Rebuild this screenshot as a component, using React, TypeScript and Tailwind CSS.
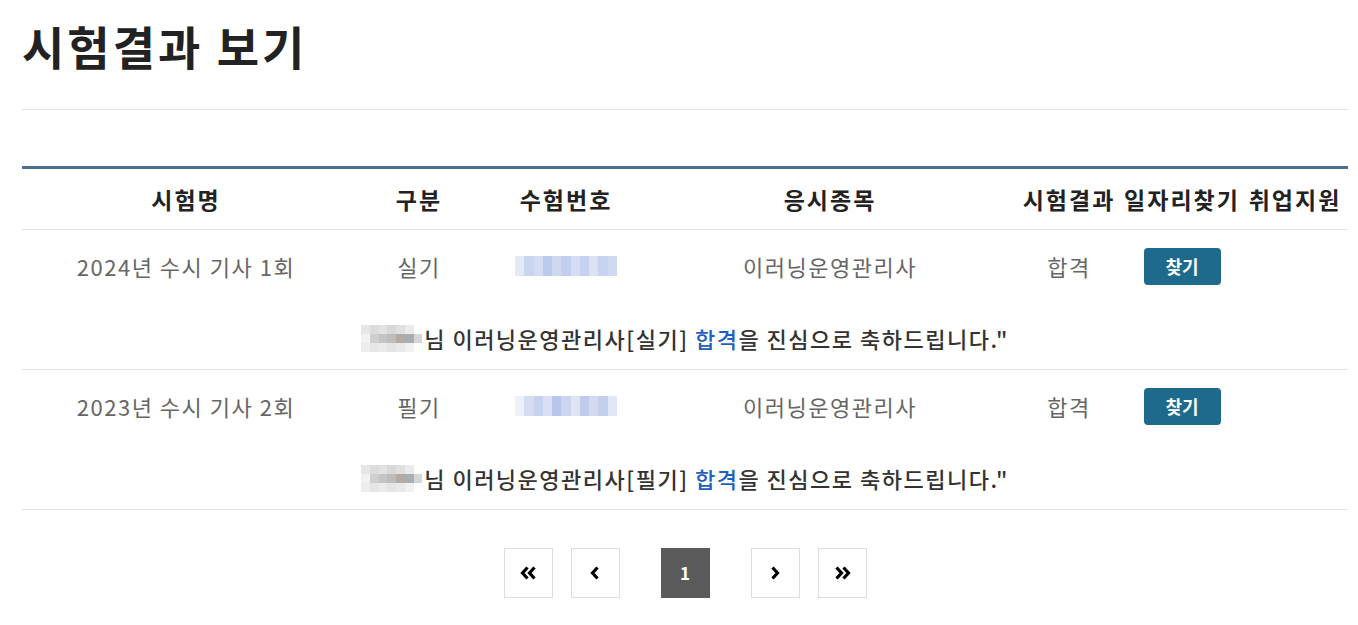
import React from 'react'

interface ResultRow {
  examName: string
  kind: string
  examNo: string[]
  subject: string
  result: string
}

const rows: ResultRow[] = [
  {
    examName: '2024년 수시 기사 1회',
    kind: '실기',
    examNo: ['bg-[#e4e9f6]', 'bg-[#c9d4ef]', 'bg-[#d3dcf2]', 'bg-[#bccaec]', 'bg-[#cdd7f0]', 'bg-[#c2cfee]', 'bg-[#d6def3]', 'bg-[#c6d2ef]', 'bg-[#dbe2f4]', 'bg-[#c8d3ef]', 'bg-[#d0d9f1]'],
    subject: '이러닝운영관리사',
    result: '합격',
  },
  {
    examName: '2023년 수시 기사 2회',
    kind: '필기',
    examNo: ['bg-[#eef1f9]', 'bg-[#d5ddf2]', 'bg-[#c7d2ef]', 'bg-[#d9e0f4]', 'bg-[#b9c6eb]', 'bg-[#cbd5f0]', 'bg-[#dfe5f5]', 'bg-[#bfcbed]', 'bg-[#d2daf1]', 'bg-[#c4cfee]', 'bg-[#e2e7f6]'],
    subject: '이러닝운영관리사',
    result: '합격',
  },
]

const cols = 'grid grid-cols-[328px_138px_156px_372px_106px_120px_106px]'

// 모자이크 처리된 이름
const nameTop = ['bg-[#e6e6e6]', 'bg-[#dcdcdc]', 'bg-[#e2e2e2]', 'bg-[#d8d8d8]', 'bg-[#e0e0e0]', 'bg-[#ebebeb]', 'bg-white']
const nameBottom = ['bg-[#f2f2f2]', 'bg-[#cfcfcf]', 'bg-[#c4c4c4]', 'bg-[#bdbdbd]', 'bg-[#b3aca6]', 'bg-[#a9aeb3]', 'bg-[#d6d6d6]']

const BlurName = () => (
  <span className="inline-flex flex-col w-[61px] h-[27px] mr-[2px]">
    <span className="flex h-[9px]">
      {nameTop.map((c, i) => <span key={i} className={`flex-1 ${c}`} />)}
    </span>
    <span className="flex h-[9px]">
      {nameBottom.map((c, i) => <span key={i} className={`flex-1 ${c}`} />)}
    </span>
    <span className="flex h-[9px]">
      {nameTop.map((c, i) => <span key={i} className={`flex-1 ${i > 5 ? 'bg-white' : c} opacity-70`} />)}
    </span>
  </span>
)

const PageButton = ({ children, active }: { children: React.ReactNode; active?: boolean }) => (
  <button
    type="button"
    className={`w-[49px] h-[50px] flex items-center justify-center text-[17px] font-bold ${
      active ? 'bg-[#5a5a5a] text-white mx-[23px]' : 'bg-white border border-[#dddddd] text-black'
    }`}
  >
    {children}
  </button>
)

export default function App() {
  return (
    <div className="w-[1358px] h-[625px] bg-white px-[22px] pr-[10px] font-['Noto_Sans_CJK_KR','Noto_Sans',sans-serif]">
      <h1 className="h-[110px] pt-[10px] text-[46px] font-bold tracking-[3px] text-[#222222] border-b border-[#e6e6e6] leading-[70px]">
        시험결과 보기
      </h1>

      <div className="mt-[56px] border-t-[3px] border-[#4b6f94]">
        <div className={`${cols} h-[61px] items-center text-center text-[23px] tracking-[2px] font-semibold text-[#222222] border-b border-[#e3e3e3]`}>
          <div>시험명</div>
          <div>구분</div>
          <div>수험번호</div>
          <div>응시종목</div>
          <div>시험결과</div>
          <div>일자리찾기</div>
          <div>취업지원</div>
        </div>

        {rows.map((row, idx) => (
          <div key={idx} className="border-b border-[#e3e3e3]">
            <div className={`${cols} h-[72px] items-center text-center text-[22px] tracking-[1.5px] text-[#666666]`}>
              <div>{row.examName}</div>
              <div>{row.kind}</div>
              <div className="flex justify-center">
                <span className="flex w-[102px] h-[20px]">
                  {row.examNo.map((c, i) => <span key={i} className={`flex-1 ${c}`} />)}
                </span>
              </div>
              <div>{row.subject}</div>
              <div>{row.result}</div>
              <div className="flex justify-center tracking-normal">
                <button type="button" className="w-[77px] h-[37px] rounded-[4px] bg-[#1d6a8c] text-white text-[18px] font-bold">
                  찾기
                </button>
              </div>
              <div />
            </div>
            <div className="h-[67px] pt-[6px] flex items-center justify-center text-[22px] tracking-[1.5px] font-medium text-[#333333]">
              <BlurName />
              님 이러닝운영관리사[{row.kind}]&nbsp;<span className="text-[#1f5fbf]">합격</span>을 진심으로 축하드립니다."
            </div>
          </div>
        ))}
      </div>

      <div className="mt-[38px] flex justify-center gap-[18px]">
        <PageButton>
          <svg width="17" height="14" viewBox="0 0 17 14" fill="none" stroke="black" strokeWidth="3.2">
            <path d="M7.5 1.5 L2.5 7 L7.5 12.5 M14.5 1.5 L9.5 7 L14.5 12.5" />
          </svg>
        </PageButton>
        <PageButton>
          <svg width="10" height="14" viewBox="0 0 10 14" fill="none" stroke="black" strokeWidth="3.2">
            <path d="M7.5 1.5 L2.5 7 L7.5 12.5" />
          </svg>
        </PageButton>
        <PageButton active>1</PageButton>
        <PageButton>
          <svg width="10" height="14" viewBox="0 0 10 14" fill="none" stroke="black" strokeWidth="3.2">
            <path d="M2.5 1.5 L7.5 7 L2.5 12.5" />
          </svg>
        </PageButton>
        <PageButton>
          <svg width="17" height="14" viewBox="0 0 17 14" fill="none" stroke="black" strokeWidth="3.2">
            <path d="M2.5 1.5 L7.5 7 L2.5 12.5 M9.5 1.5 L14.5 7 L9.5 12.5" />
          </svg>
        </PageButton>
      </div>
    </div>
  )
}
